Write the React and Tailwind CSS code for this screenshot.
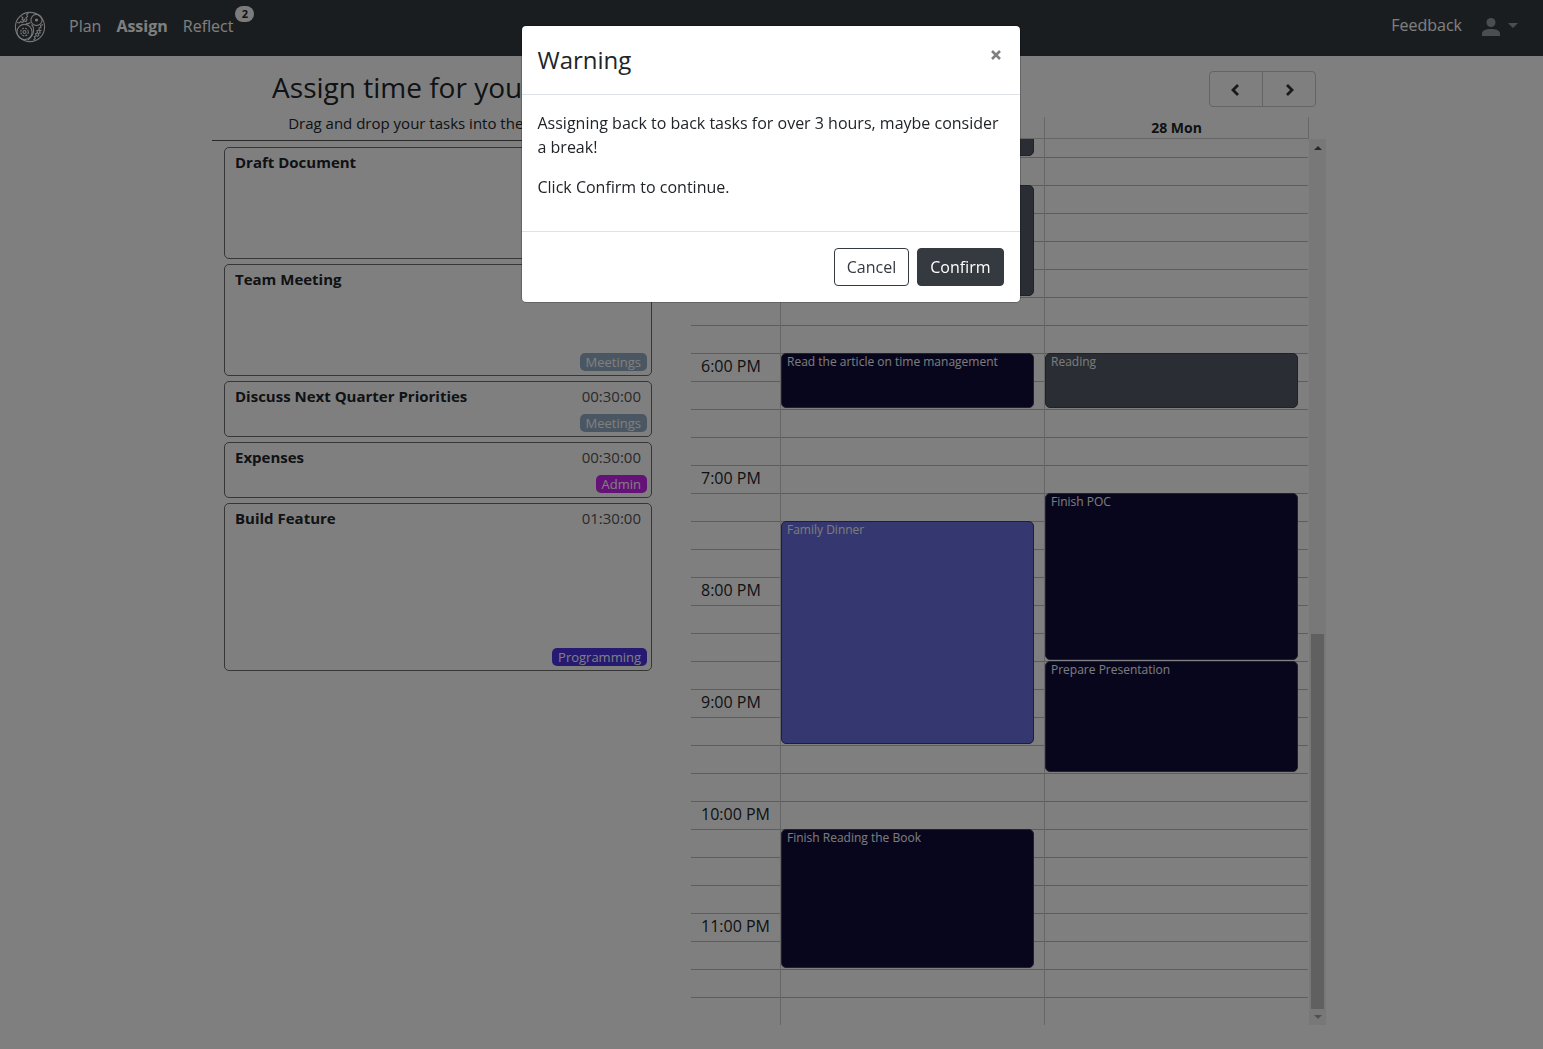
import React from "react";

const TASKS = [
  { name: "Draft Document", time: "01:00:00", tag: null, height: "h-[112px]" },
  { name: "Team Meeting", time: "01:00:00", tag: "Meetings", tone: "bg-[#94aec4]", height: "h-[112px]" },
  { name: "Discuss Next Quarter Priorities", time: "00:30:00", tag: "Meetings", tone: "bg-[#94aec4]", height: "h-[56px]" },
  { name: "Expenses", time: "00:30:00", tag: "Admin", tone: "bg-[#c822f0]", height: "h-[56px]" },
  { name: "Build Feature", time: "01:30:00", tag: "Programming", tone: "bg-[#4a32e4]", height: "h-[168px]" },
];

// Rows are quarter hours, counted from 4:00 PM.
const SLOTS = Array.from({ length: 32 }, (_, i) => i);
const HOURS = ["5:00 PM", "6:00 PM", "7:00 PM", "8:00 PM", "9:00 PM", "10:00 PM", "11:00 PM"];

const NAVY = "bg-[#110c3a]";
const SLATE = "bg-[#555b66]";
const EVENTS = [
  { day: 1, start: 0, span: 1, title: "", tone: SLATE },
  { day: 1, start: 2, span: 4, title: "", tone: SLATE },
  { day: 1, start: 8, span: 2, title: "Read the article on time management", tone: NAVY },
  { day: 1, start: 14, span: 8, title: "Family Dinner", tone: "bg-[#696ee0]" },
  { day: 1, start: 25, span: 5, title: "Finish Reading the Book", tone: NAVY },
  { day: 2, start: 8, span: 2, title: "Reading", tone: SLATE },
  { day: 2, start: 13, span: 6, title: "Finish POC", tone: NAVY },
  { day: 2, start: 19, span: 4, title: "Prepare Presentation", tone: NAVY },
];

function Logo() {
  return (
    <svg viewBox="0 0 32 32" className="size-8" fill="none" stroke="currentColor" strokeWidth="1.1">
      <circle cx="16" cy="16" r="14.6" />
      <circle cx="22.5" cy="9" r="5.6" />
      <circle cx="22.5" cy="9" r="1" fill="currentColor" />
      <circle cx="10.5" cy="21" r="7.6" />
      <circle cx="10.5" cy="21" r="3.8" strokeDasharray="2 1" />
      <circle cx="10.5" cy="21" r="1.5" />
      <path d="M3 11.5l2.5.5 1-1.5 2 1 1.500-1.500 2 .5 1-2-1.200-1.500 1.700-1.500-.8-2 1.800-1.200M7.500 5.500l1.500 1.500-1 1.500 1.500 1 1.700-1.500" />
      <path d="M29 13.500l-2.500 1 .5 2-2 .5.3 2-2.300.7.5 2-2 1 .8 2-2 1 1 1.800-1.800 1.500M27.500 19l-1.800 1 .5 1.800-2 .8.6 1.800-1.800 1" />
      <path d="M17.500 13.500c2 2 2.500 6 1.500 9s-3 5-5 6.500M12 12.500c1.500.3 3 0 4.500-1" />
    </svg>
  );
}

function Header() {
  return (
    <nav className="flex h-14 shrink-0 items-center bg-[#343a40] pl-3.5 pr-[25px] text-white">
      <a href="#home" aria-label="Home" className="mr-[23px] pb-0.5 text-white/90">
        <Logo />
      </a>
      <div className="flex items-center gap-[15px] pb-1 leading-6">
        <a href="#plan">Plan</a>
        <a href="#assign" className="font-bold">Assign</a>
        <a href="#reflect" className="relative">
          Reflect
          <span className="absolute -top-2 left-full ml-0.5 flex h-4 w-[19px] items-center justify-center rounded-full bg-[#f8f9fa] text-[11px] font-bold text-[#212529]">
            2
          </span>
        </a>
      </div>
      <a href="#feedback" className="ml-auto mr-5 pb-1.5 leading-6">Feedback</a>
      <button type="button" aria-label="Account" className="flex items-center gap-2 pb-0.5 text-[#999b9e]">
        <svg viewBox="0 0 18 18" className="size-[18px]" fill="currentColor">
          <circle cx="9" cy="4.500" r="4.500" />
          <path d="M0 18v-2.500C0 12.300 4.500 11 9 11s9 1.300 9 4.500V18z" />
        </svg>
        <svg viewBox="0 0 10 5" className="mb-1 h-[5px] w-2.5" fill="currentColor">
          <path d="M0 0h10L5 5z" />
        </svg>
      </button>
    </nav>
  );
}

function TaskCard({ task }) {
  return (
    <li className={`flex flex-col justify-between rounded-[5px] border border-[#6c6c6c] pb-1 pl-2.5 pr-1 pt-0.5 ${task.height}`}>
      <div className="flex justify-between pr-1.5 text-[15px] leading-6">
        <span className="font-bold">{task.name}</span>
        <span className="text-[#555]">{task.time}</span>
      </div>
      {task.tag && (
        <span className={`self-end rounded-[5px] px-1.5 text-[13px] leading-[18px] text-white ${task.tone}`}>
          {task.tag}
        </span>
      )}
    </li>
  );
}

function TaskList() {
  return (
    <section className="w-[452px] shrink-0">
      <header className="flex flex-col items-center border-b border-[#555] pb-[5px] pt-[11px]">
        <h1 className="pl-1 text-[28px] leading-10">Assign time for your tasks</h1>
        <p className="pt-1 text-[15px] leading-6">Drag and drop your tasks into the calendar</p>
      </header>
      <ul className="flex flex-col gap-[5px] px-3 pt-1.5">
        {TASKS.map((task) => (
          <TaskCard key={task.name} task={task} />
        ))}
      </ul>
    </section>
  );
}

function Chevron({ d }) {
  return (
    <svg viewBox="0 0 12 12" className="size-3" fill="none" stroke="currentColor" strokeWidth="2.8">
      <path d={d} />
    </svg>
  );
}

function Calendar() {
  return (
    <section className="flex min-w-0 flex-1 flex-col">
      <div className="flex justify-end pb-2.5 pr-2.5 pt-[15px]">
        <div className="flex h-9 divide-x divide-[#c8c8c8] rounded border border-[#c8c8c8] text-[#333]">
          <button type="button" aria-label="Previous" className="flex w-[53px] items-center justify-center pt-0.5">
            <Chevron d="M8 1L3 6l5 5" />
          </button>
          <button type="button" aria-label="Next" className="flex w-[52px] items-center justify-center pt-0.5">
            <Chevron d="M4 1l5 5-5 5" />
          </button>
        </div>
      </div>
      <div className="mr-[17px] grid h-[22px] grid-cols-[89px_1fr_1fr] border-b border-r border-[#ccc] text-center text-sm font-bold leading-[22px]">
        <span />
        <span className="border-l border-[#ccc]">27 Sun</span>
        <span className="border-l border-[#ccc]">28 Mon</span>
      </div>
      <div className="flex min-h-0 flex-1">
        <div className="flex min-w-0 flex-1 flex-col justify-end overflow-hidden">
          <div className="grid shrink-0 grid-cols-[89px_1fr_1fr] grid-rows-[repeat(32,28px)] pr-px">
            {SLOTS.map((slot) => (
              <div key={slot} className="col-span-3 col-start-1 border-t border-[#bbb]" style={{ gridRowStart: slot + 1 }} />
            ))}
            {HOURS.map((hour, i) => (
              <span key={hour} className="col-start-1 pl-2.5 pt-px leading-6" style={{ gridRowStart: i * 4 + 5 }}>
                {hour}
              </span>
            ))}
            <div className="col-start-2 row-span-full row-start-1 border-l border-[#ccc]" />
            <div className="col-start-3 row-span-full row-start-1 border-l border-[#ccc]" />
            {EVENTS.map((event) => (
              <article
                key={`${event.day}-${event.start}`}
                className={`mb-px ml-px mr-2.5 rounded-[5px] border border-[#444] px-[5px] text-xs leading-4 text-[#f8f8f8] ${event.tone}`}
                style={{ gridColumnStart: event.day + 1, gridRow: `${event.start + 1} / span ${event.span}` }}
              >
                {event.title}
              </article>
            ))}
          </div>
        </div>
        <div className="flex w-[17px] flex-col items-center justify-end bg-[#f1f1f1]">
          <svg viewBox="0 0 8 4" className="mb-auto mt-[7px] h-1 w-2" fill="#505050">
            <path d="M0 4h8L4 0z" />
          </svg>
          <div className="h-[375px] w-[13px] bg-[#c1c1c1]" />
          <svg viewBox="0 0 8 4" className="mb-[6px] mt-[6px] h-1 w-2" fill="#a0a0a0">
            <path d="M0 0h8L4 4z" />
          </svg>
        </div>
      </div>
    </section>
  );
}

function WarningDialog() {
  return (
    <div className="fixed inset-0 flex items-start justify-center bg-black/50 pr-0.5 pt-[26px]">
      <div role="dialog" aria-modal="true" aria-labelledby="warning-title" className="w-[498px] rounded bg-white outline outline-black/20">
        <header className="flex h-[69px] items-start justify-between border-b border-[#dee2e6] px-4 pt-4">
          <h2 id="warning-title" className="text-2xl leading-9">Warning</h2>
          <button type="button" aria-label="Close" className="flex h-[26px] w-4 items-center justify-center text-[#808080]">
            <svg viewBox="0 0 10 10" className="size-2.5" fill="none" stroke="currentColor" strokeWidth="2.500">
              <path d="M1 1l8 8M9 1L1 9" />
            </svg>
          </button>
        </header>
        <div className="flex flex-col gap-4 px-4 pb-8 pt-4 leading-6">
          <p>Assigning back to back tasks for over 3 hours, maybe consider a break!</p>
          <p>Click Confirm to continue.</p>
        </div>
        <footer className="flex justify-end gap-2 border-t border-[#dee2e6] p-4 leading-6">
          <button type="button" className="rounded border border-[#343a40] px-3 py-1.5 text-[#343a40]">Cancel</button>
          <button type="button" className="rounded border border-[#343a40] bg-[#343a40] px-3 py-1.5 text-white">Confirm</button>
        </footer>
      </div>
    </div>
  );
}

export default function App() {
  return (
    <div className="flex h-screen flex-col bg-white font-['Open_Sans',sans-serif] text-base text-[#212529]">
      <Header />
      <main className="mx-auto flex min-h-0 w-full max-w-[1119px] flex-1 gap-[27px] pb-6 pr-[5px]">
        <TaskList />
        <Calendar />
      </main>
      <WarningDialog />
    </div>
  );
}
